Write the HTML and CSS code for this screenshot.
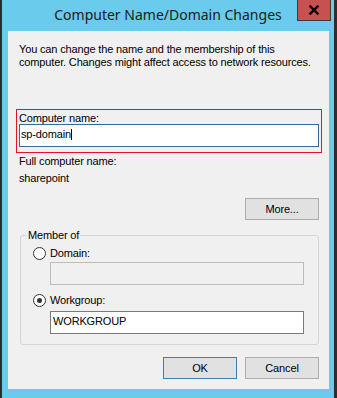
FILE: index.html
```
<!DOCTYPE html>
<html lang="en">
<head>
  <meta charset="UTF-8" />
  <title>Computer Name/Domain Changes</title>
  <link rel="stylesheet" href="styles.css">
</head>
<body>

  <div class="window">
    <div class="titlebar">
      <span class="title">Computer Name/Domain Changes</span>
      <button class="close-btn" aria-label="Close">
        <svg width="10" height="10" viewBox="0 0 10 10">
          <path d="M1.5 1.5 L8.5 8.5 M8.5 1.5 L1.5 8.5" stroke="#000" stroke-width="2.4" stroke-linecap="square" fill="none"/>
        </svg>
      </button>
    </div>

    <div class="client">
      <p class="intro">You can change the name and the membership of this<br>computer. Changes might affect access to network resources.</p>

      <!-- highlighted computer name field -->
      <div class="name-box">
        <div class="field-label">Computer name:</div>
        <div class="textbox focused">sp-domain<span class="caret"></span></div>
      </div>

      <p class="caption">Full computer name:</p>
      <p class="value">sharepoint</p>

      <div class="button-row more-row">
        <button class="win-btn">More...</button>
      </div>

      <fieldset class="member-group">
        <legend>Member of</legend>
        <div class="radio-row"><span class="radio"></span>Domain:</div>
        <div class="textbox disabled"></div>
        <div class="radio-row workgroup-row"><span class="radio checked"></span>Workgroup:</div>
        <div class="textbox group-box">WORKGROUP</div>
      </fieldset>

      <div class="button-row dialog-buttons">
        <button class="win-btn default">OK</button>
        <button class="win-btn">Cancel</button>
      </div>
    </div>
  </div>

</body>
</html>
```

FILE: styles.css
```
* { box-sizing: border-box; }

body {
  margin: 0;
  font-family: 'Liberation Sans', Arial, sans-serif;
  font-size: 11px;
  letter-spacing: -0.15px;
  color: #000;
}

.window {
  width: 337px;
  height: 398px;
  background: #6bcbec;
  border-left: 2px solid #2e2e2e;
  border-right: 3px solid #2e2e2e;
  display: flex;
  flex-direction: column;
}

/* Title bar */
.titlebar {
  height: 31px;
  display: grid;
  grid-template-columns: 1fr auto 1fr;
}

.title {
  grid-column: 2;
  font-family: 'Noto Sans', sans-serif;
  font-size: 14px;
  letter-spacing: 0;
  line-height: 30px;
  color: #1b1b1b;
  white-space: nowrap;
}

.close-btn {
  grid-column: 3;
  justify-self: end;
  width: 34px;
  height: 21px;
  margin-right: 3px;
  padding: 0;
  background: #c75050;
  border: 1px solid #3c3c3c;
  border-top: none;
  display: flex;
  align-items: center;
  justify-content: center;
}

/* Client area */
.client {
  flex: 1;
  margin: 0 5px 9px 6px;
  background: #f0f0f0;
  padding-top: 12px;
}

.intro {
  margin: 0;
  padding-left: 11px;
  line-height: 13px;
}

.name-box {
  margin: 40px 0 0 8px;
  width: 306px;
  border: 1px solid #e81123;
  padding: 2px 2px 5px 2px;
}

.field-label {
  line-height: 12px;
}

.textbox {
  height: 23px;
  border: 1px solid #7a7a7a;
  background: #fff;
  line-height: 19px;
  padding: 0 2px;
  white-space: nowrap;
}

.textbox.focused {
  border-color: #3a6898;
  padding-left: 1px;
}

.caret {
  display: inline-block;
  width: 1px;
  height: 11px;
  background: #000;
  vertical-align: -2px;
}

.caption {
  margin: 2px 0 0;
  padding-left: 11px;
  line-height: 13px;
}

.value {
  margin: 4px 0 0;
  padding-left: 11px;
  line-height: 13px;
}

.button-row {
  display: flex;
  justify-content: flex-end;
  gap: 8px;
  padding-right: 10px;
}

.more-row { margin-top: 13px; }

.win-btn {
  width: 74px;
  height: 22px;
  padding: 0;
  background: #e1e1e1;
  border: 1px solid #adadad;
  font-family: 'Liberation Sans', Arial, sans-serif;
  font-size: 11px;
  letter-spacing: -0.15px;
  color: #000;
}

.win-btn.default {
  border-color: #3c7fb1;
}

/* Member of group */
.member-group {
  margin: 9px 0 0 12px;
  width: 299px;
  min-width: 0;
  padding: 0 0 10px 0;
  border: 1px solid #d5d5d5;
  border-radius: 3px;
}

.member-group legend {
  margin-left: 6px;
  padding: 0 1px;
  line-height: 12px;
}

.radio-row {
  display: flex;
  align-items: center;
  height: 13px;
  line-height: 13px;
  margin: 6px 0 0 12px;
}

.workgroup-row { margin-top: 9px; }

.radio {
  width: 13px;
  height: 13px;
  border: 1px solid #333;
  border-radius: 50%;
  background: #fff;
  margin-right: 4px;
  display: flex;
  align-items: center;
  justify-content: center;
}

.radio.checked::after {
  content: '';
  width: 5px;
  height: 5px;
  border-radius: 50%;
  background: #333;
}

.member-group .textbox {
  margin: 2px 0 0 29px;
  width: 254px;
}

.textbox.disabled {
  background: #f0f0f0;
  border-color: #bcbcbc;
}

.member-group .group-box { margin-top: 4px; }

.dialog-buttons { margin-top: 12px; }
```
